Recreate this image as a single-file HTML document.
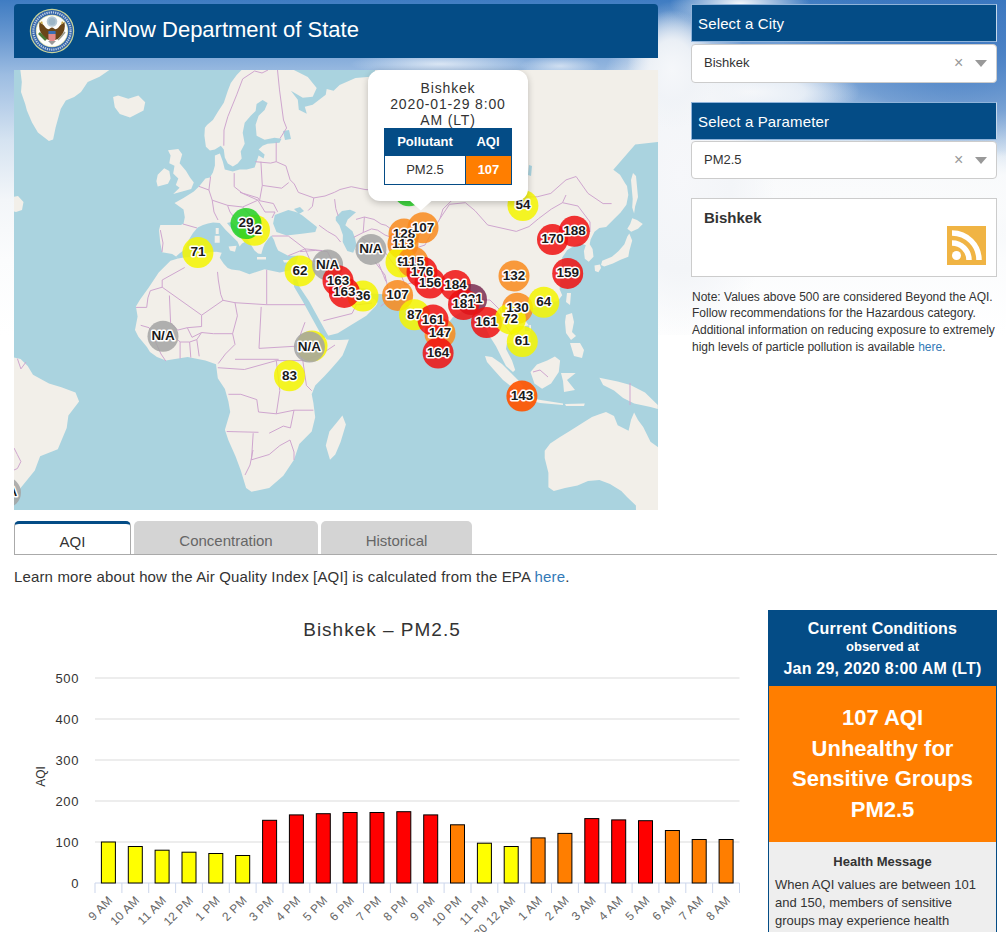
<!DOCTYPE html>
<html><head><meta charset="utf-8">
<style>
*{box-sizing:border-box}
html,body{margin:0;padding:0}
body{width:1006px;height:932px;overflow:hidden;position:relative;font-family:"Liberation Sans",sans-serif;color:#333;
background:#fff}
.sky{position:absolute;left:0;top:0;width:1006px;height:335px;
background:
 radial-gradient(ellipse 45px 60px at 672px 70px, rgba(245,247,250,1) 0%, rgba(240,243,247,.9) 50%, rgba(240,243,247,0) 100%),
 radial-gradient(ellipse 95px 175px at 680px 175px, rgba(246,247,250,1) 0%, rgba(243,245,248,1) 55%, rgba(243,245,248,0) 100%),
 radial-gradient(ellipse 70px 26px at 740px 4px, rgba(255,255,255,.95) 0%, rgba(255,255,255,0) 100%),
 radial-gradient(ellipse 110px 30px at 750px 92px, rgba(245,247,250,1) 0%, rgba(245,247,250,.8) 50%, rgba(245,247,250,0) 100%),
 radial-gradient(ellipse 340px 50px at 850px 195px, rgba(250,251,252,1) 0%, rgba(250,251,252,.9) 60%, rgba(250,251,252,0) 100%),
 radial-gradient(ellipse 180px 110px at 960px 50px, rgba(55,115,190,.85) 0%, rgba(55,115,190,.5) 60%, rgba(55,115,190,0) 100%),
 radial-gradient(ellipse 90px 12px at 440px 64px, rgba(250,251,253,.7) 0%, rgba(250,251,253,0) 100%),
 radial-gradient(ellipse 40px 10px at 560px 66px, rgba(250,251,253,.6) 0%, rgba(250,251,253,0) 100%),
 linear-gradient(to bottom, #3f7cc2 0px, #6d9bd2 40px, #9dbde2 75px, #d5e3f1 140px, #f3f6f9 200px, #fbfcfd 260px, #fff 335px);}
.hdr{position:absolute;left:14px;top:4px;width:644px;height:54px;background:#044c86;border-radius:4px 4px 0 0}
.hdr .t{position:absolute;left:71px;top:13px;font-size:22px;color:#fff;line-height:26px;white-space:nowrap}
.seal{position:absolute;left:29px;top:7.5px}
.map{position:absolute;left:14px;top:70px}
.ml{font-size:13.5px;font-weight:bold;fill:#1a1a1a;stroke:#fff;stroke-width:3px;stroke-linejoin:round;paint-order:stroke;text-anchor:middle}
.tip{position:absolute;left:368px;top:70px;width:160px;height:131px;background:#fff;border-radius:12px;box-shadow:0 2px 7px rgba(0,0,0,.22)}
.tiparrow{position:absolute;left:411px;top:193px;width:20px;height:20px;overflow:hidden}
.tiparrow:after{content:"";position:absolute;left:3px;top:-8px;width:14px;height:14px;background:#fff;transform:rotate(45deg);box-shadow:0 3px 14px rgba(0,0,0,.4)}
.tipt{position:absolute;left:368px;top:80px;width:160px;text-align:center;font-size:14px;line-height:16px;letter-spacing:0.85px;color:#333}
.ttab{position:absolute;left:384px;top:128px;width:128px;height:57px;border:1px solid #044c86;background:#fff}
.ttab .h1{position:absolute;left:0;top:0;width:80px;height:27px;background:#044c86;color:#fff;font-weight:bold;font-size:13px;text-align:center;line-height:25px}
.ttab .h2{position:absolute;left:80px;top:0;width:46px;height:27px;background:#044c86;color:#fff;font-weight:bold;font-size:13px;text-align:center;line-height:25px}
.ttab .c1{position:absolute;left:0;top:27px;width:80px;height:28px;background:#fff;color:#333;font-size:13px;text-align:center;line-height:28px}
.ttab .c2{position:absolute;left:80px;top:27px;width:46px;height:28px;background:#ff7e00;color:#fff;font-weight:bold;font-size:13px;text-align:center;line-height:28px;border-left:1px solid #044c86}
.sh{position:absolute;left:691px;width:306px;height:38px;background:#044c86;color:#fff;font-size:15px;line-height:37px;padding-left:6px;letter-spacing:0.15px;border:1px solid #8fb3da;border-right-color:#c5d8ec}
.sel{position:absolute;left:691px;width:306px;height:38px;background:#fff;border:1px solid #ccc;border-radius:4px;font-size:13px;line-height:36px;padding-left:12px;color:#333}
.sel .x{position:absolute;left:262px;top:0;font-size:16px;color:#999}
.sel .a{position:absolute;left:283px;top:15px;width:0;height:0;border-left:6px solid transparent;border-right:6px solid transparent;border-top:7px solid #999}
.rss{position:absolute;left:691px;top:198px;width:306px;height:79px;background:#fff;border:1px solid #ccc}
.rss .n{position:absolute;left:12px;top:10px;font-size:15px;font-weight:bold;color:#333}
.rss svg{position:absolute;left:255px;top:27px}
.note{position:absolute;left:692px;top:288.5px;width:312px;font-size:12px;line-height:16.9px;color:#333}
a{color:#337ab7;text-decoration:none}
.tabs{position:absolute;left:14px;top:521px;width:983px;height:34px;border-bottom:1px solid #aaa}
.tab{position:absolute;top:0;height:33px;border-radius:5px 5px 0 0;font-size:15px;text-align:center;line-height:40px}
.learn{position:absolute;left:14px;top:568px;font-size:15px;letter-spacing:0.15px;color:#333;white-space:nowrap}
.chart{position:absolute;left:0;top:600px}
.ct{font-size:19px;fill:#333;letter-spacing:1px}
.yl{font-size:13px;fill:#333;letter-spacing:0.6px}
.xl{font-size:12px;fill:#666;letter-spacing:0.3px}
.yt{font-size:12px;fill:#333}
.cc{position:absolute;left:768px;top:610px;width:229px;height:330px;border:1px solid #044c86;background:#eee}
.cc .top{position:absolute;left:0;top:0;width:227px;height:75px;background:#044c86;color:#fff;text-align:center;font-weight:bold}
.cc .org{position:absolute;left:0;top:75px;width:227px;height:156px;background:#ff7e00;color:#fff;text-align:center;font-weight:bold;font-size:22px;line-height:30.7px;padding-top:17px}
.cc .hm{position:absolute;left:0;top:231px;width:227px;text-align:center;font-weight:bold;font-size:13px;color:#333;padding-top:12px}
.cc .hb{position:absolute;left:6px;top:265px;width:212px;font-size:13px;line-height:18px;color:#333}
</style></head><body>
<div class="sky"></div>
<div class="hdr"><div class="t">AirNow Department of State</div></div>
<svg class="seal" width="46" height="46" viewBox="-23 -23 46 46">
 <circle r="22.2" fill="#c9d49a"/>
 <circle r="21" fill="#2f62a8"/>
 <circle r="18.6" fill="none" stroke="#e8eef6" stroke-width="2.2" stroke-dasharray="1.3 0.9" opacity="0.75"/>
 <circle r="16.2" fill="#d8dca8"/>
 <circle r="15.4" fill="#fdfdfb"/>
 <circle cx="0" cy="-9.5" r="5.3" fill="#b4c8d6"/>
 <circle cx="0" cy="-9.5" r="3.5" fill="#9cb6c8"/>
 <path d="M-12.5,-9 Q-14,-1 -9,5 Q-6,8.5 -3,9 L3,9 Q6,8.5 9,5 Q14,-1 12.5,-9 Q9,-7 6,-3 Q4,-1 2,-2.5 Q0,-4.5 -2,-2.5 Q-4,-1 -6,-3 Q-9,-7 -12.5,-9Z" fill="#6a4619"/>
 <path d="M-12,-8 L-10,-10 L-9,-7Z M12,-8 L10,-10 L9,-7Z" fill="#c9a840"/>
 <rect x="-3.6" y="0" width="7.2" height="3" fill="#3a6fb5"/>
 <path d="M-3.6,3 L3.6,3 L3.6,7 Q3.6,10 0,11 Q-3.6,10 -3.6,7Z" fill="#e38a8a"/>
 <path d="M-13,2 Q-10,5 -6,9" stroke="#4a7a35" stroke-width="2.6" fill="none"/>
 <path d="M13,1 Q10,5 6,9" stroke="#9a9a8a" stroke-width="1.6" fill="none"/>
 <path d="M-4,10 L0,14 L4,10Z" fill="#9a9a9a"/>
</svg>
<svg class="map" width="644" height="440" viewBox="14 70 644 440">
<rect x="14" y="70" width="644" height="440" fill="#aad3df"/>
<path d="M241.7,69.8 L236.7,75.0 L230.8,82.9 L227.8,90.8 L223.8,102.8 L217.9,111.7 L212.9,120.0 L207.0,125.0 L204.9,127.8 L204.4,135.7 L205.9,146.7 L209.9,150.6 L214.9,149.6 L220.8,145.7 L223.8,149.6 L224.8,157.6 L227.8,163.6 L232.8,166.5 L237.7,163.6 L241.7,158.6 L240.7,151.6 L244.7,143.7 L242.7,132.7 L244.7,122.8 L250.7,115.8 L255.6,110.9 L256.6,103.9 L262.6,99.9 L267.6,102.9 L264.6,109.9 L258.6,115.8 L255.6,124.8 L256.6,135.7 L264.6,139.7 L274.5,137.7 L281.5,138.7 L279.5,142.7 L267.6,143.7 L262.6,145.7 L258.6,149.6 L264.6,154.6 L263.6,158.6 L258.6,155.6 L256.6,161.6 L254.6,167.5 L246.7,169.5 L239.7,169.5 L232.8,171.5 L224.8,169.5 L222.8,161.6 L219.9,153.6 L214.9,155.6 L214.9,165.5 L212.9,172.5 L209.9,177.5 L205.4,178.6 L199.0,186.4 L193.8,191.5 L183.5,198.0 L174.5,203.1 L183.5,209.6 L184.8,217.3 L183.5,223.7 L180.9,225.0 L160.3,225.0 L159.0,230.2 L160.3,243.1 L162.1,252.3 L172.2,254.0 L176.0,256.5 L178.0,258.5 L170.5,260.8 L158.7,272.6 L148.6,287.8 L140.1,299.6 L135.9,306.4 L137.6,316.5 L135.0,330.0 L138.4,336.8 L146.9,347.0 L150.0,352.0 L157.0,357.1 L165.8,360.6 L175.0,359.0 L187.7,357.1 L205.4,360.6 L216.0,364.2 L217.8,378.3 L224.9,389.0 L228.4,401.4 L230.2,412.0 L224.9,429.7 L228.4,440.3 L235.5,456.3 L240.8,470.4 L246.1,488.1 L251.5,491.7 L269.2,488.1 L283.3,475.7 L294.0,459.8 L299.3,443.9 L311.7,431.5 L315.2,417.3 L313.4,403.1 L311.7,394.3 L315.2,385.4 L324.1,376.6 L331.0,369.0 L338.0,361.0 L342.5,355.4 L346.0,347.0 L348.9,339.5 L340.0,340.0 L332.0,340.0 L326.6,339.5 L325.0,336.4 L337.7,333.2 L353.6,323.6 L366.3,315.7 L375.9,306.1 L377.5,303.0 L374.8,299.5 L369.0,297.0 L368.0,291.0 L372.7,293.5 L386.6,294.5 L401.0,296.0 L404.0,300.0 L407.2,304.9 L412.0,309.0 L419.0,316.2 L422.0,327.5 L426.0,338.0 L428.8,348.1 L433.5,351.3 L437.0,345.0 L442.1,335.5 L447.4,324.2 L453.0,317.0 L459.7,312.9 L467.4,306.5 L476.7,304.9 L479.4,312.0 L480.0,320.0 L484.4,325.0 L490.0,336.8 L496.0,346.3 L502.0,358.3 L506.0,366.0 L513.0,372.0 L515.2,370.0 L512.0,360.5 L506.0,349.0 L507.0,343.0 L512.2,343.4 L518.3,349.5 L525.0,346.0 L530.7,340.3 L530.0,333.0 L529.1,326.1 L523.5,318.0 L523.0,310.9 L530.7,308.1 L540.0,307.0 L546.1,305.4 L552.0,302.0 L557.5,301.3 L562.2,295.3 L559.6,289.3 L561.0,275.0 L562.2,257.6 L567.3,249.9 L574.0,246.0 L580.0,243.0 L585.8,245.2 L583.9,251.0 L584.8,258.8 L588.7,261.7 L593.5,256.8 L592.6,249.1 L589.7,244.3 L590.6,239.4 L594.5,231.7 L599.3,227.9 L606.1,226.9 L613.8,219.2 L620.6,212.4 L626.4,204.7 L628.3,195.0 L627.0,186.0 L625.1,183.3 L620.0,174.8 L613.3,169.8 L635.2,144.4 L657.6,141.9 L660.0,141.9 L660.0,68.0 L241.7,68.0 Z M20.1,68.0 L21.8,81.9 L21.0,92.0 L25.2,103.9 L26.9,110.6 L32.0,122.5 L37.9,132.6 L48.9,141.0 L53.1,139.4 L55.6,127.5 L60.7,108.9 L65.8,100.5 L74.2,97.1 L81.0,92.0 L87.7,81.9 L99.6,76.8 L112.2,68.0 Z M113.1,97.1 L118.1,95.4 L128.3,98.8 L138.4,95.4 L145.2,102.2 L143.5,110.6 L130.0,117.4 L119.8,114.0 L114.8,107.2 Z M168.0,150.3 L178.3,149.0 L182.2,154.2 L179.6,163.2 L186.1,170.9 L190.0,177.4 L193.8,182.5 L191.2,189.0 L182.2,191.5 L173.2,194.1 L179.6,187.7 L175.8,185.1 L178.3,178.6 L173.2,173.5 L174.5,165.8 L169.3,163.2 L170.6,155.5 Z M157.7,174.8 L164.2,168.3 L169.3,170.9 L170.6,178.6 L168.0,183.8 L157.7,186.4 L156.4,181.2 Z M12.0,197.0 L18.0,196.0 L23.5,202.0 L22.0,210.0 L16.0,212.0 L12.0,211.0 Z M12.0,357.1 L20.6,358.9 L27.7,365.9 L33.0,374.8 L49.0,383.6 L61.4,387.2 L75.5,392.5 L79.1,401.4 L68.4,415.5 L66.7,427.9 L57.8,449.2 L40.1,456.3 L34.8,470.4 L20.6,488.1 L12.0,500.0 Z M342.4,415.5 L345.9,424.4 L340.6,442.1 L335.3,454.5 L330.0,459.8 L325.8,445.6 L329.4,431.5 L338.2,420.8 Z M438.0,341.0 L442.0,344.0 L443.0,351.0 L439.0,354.0 L436.0,348.0 Z M632.2,218.2 L637.0,220.0 L642.8,224.0 L638.0,228.8 L631.2,231.7 L627.3,228.8 L630.2,224.0 Z M629.3,233.6 L632.2,240.4 L629.3,251.0 L628.3,256.8 L620.6,259.7 L612.9,263.6 L604.2,266.5 L601.0,265.0 L602.2,260.7 L611.9,256.8 L618.6,251.0 L624.4,244.3 L627.3,236.5 Z M594.5,265.5 L600.0,264.5 L601.0,268.0 L598.4,272.3 L595.0,271.0 Z M633.0,173.0 L636.0,176.0 L638.0,197.0 L635.1,206.6 L634.1,213.4 L632.2,207.6 L632.7,198.9 L631.0,180.0 Z M567.0,293.0 L571.0,293.0 L570.0,305.0 L566.0,302.0 Z M525.0,326.0 L531.0,325.0 L531.0,331.0 L525.0,331.0 Z M566.0,315.0 L572.0,313.0 L574.0,322.0 L572.0,332.0 L576.0,336.0 L571.0,340.0 L566.0,333.0 L565.0,322.0 Z M570.0,343.0 L580.0,343.0 L584.0,350.0 L582.0,358.0 L574.0,356.0 Z M485.0,356.0 L492.0,357.0 L502.0,364.0 L511.0,373.0 L518.0,380.0 L523.0,386.0 L521.0,391.0 L513.0,388.0 L503.0,380.0 L494.0,370.0 L487.0,362.0 Z M532.0,398.0 L539.2,399.7 L563.0,403.4 L563.0,405.0 L540.0,403.0 L532.0,401.0 Z M565.0,404.0 L584.8,403.4 L584.0,406.0 L566.0,406.0 Z M530.5,372.0 L536.9,364.4 L547.2,360.4 L554.9,356.6 L560.1,360.4 L558.8,372.0 L551.1,383.6 L542.1,388.8 L534.4,383.6 Z M561.0,373.0 L575.7,373.0 L567.0,380.0 L575.0,390.0 L564.0,392.0 L563.0,381.0 Z M599.4,377.8 L617.7,381.5 L630.4,385.1 L645.0,392.4 L657.8,405.0 L657.8,409.0 L650.5,407.0 L634.1,403.4 L623.1,397.9 L614.0,390.6 L603.1,385.1 Z M544.7,450.8 L550.2,443.5 L560.0,437.0 L570.2,430.7 L584.8,421.6 L592.0,417.0 L599.4,414.3 L606.0,412.0 L614.0,416.1 L617.7,425.2 L628.6,430.7 L631.0,420.0 L634.1,412.5 L638.0,420.0 L643.2,427.1 L650.5,441.7 L657.8,447.1 L660.0,447.0 L660.0,512.0 L636.0,512.0 L635.9,505.5 L627.0,497.0 L621.3,490.9 L610.0,484.0 L599.4,480.0 L588.0,481.0 L577.5,485.4 L565.0,488.0 L553.8,490.9 L548.4,487.3 L548.4,472.7 L544.7,458.1 Z" fill="#f2efe9" fill-rule="nonzero"/>
<path d="M176.0,256.5 L180.0,253.0 L184.8,249.5 L187.0,244.0 L189.9,237.9 L193.0,233.0 L197.7,227.6 L203.0,225.0 L208.0,223.5 L213.1,222.4 L219.7,222.9 L225.7,229.9 L231.6,235.8 L237.6,241.8 L239.6,246.5 L242.0,243.5 L244.4,242.2 L243.5,240.0 L238.0,236.0 L232.0,229.0 L227.0,223.0 L231.0,222.0 L238.0,228.0 L245.0,235.0 L249.4,242.2 L254.5,250.6 L258.0,253.5 L261.3,254.0 L263.0,248.0 L264.6,243.9 L268.0,239.0 L271.4,235.4 L274.0,240.0 L276.0,246.0 L278.1,250.6 L288.3,255.7 L298.4,255.7 L296.0,263.0 L295.0,269.2 L279.8,272.6 L264.6,269.2 L249.4,274.3 L239.6,270.6 L231.6,269.6 L227.7,268.0 L223.7,263.7 L219.7,257.7 L221.7,252.7 L216.7,251.7 L210.6,252.0 L203.6,254.5 L195.0,256.5 L184.0,257.5 L178.0,258.5 Z M274.8,215.1 L288.3,210.0 L296.0,212.0 L301.8,215.1 L317.0,227.0 L315.3,232.0 L301.8,233.7 L286.6,235.4 L276.5,232.0 L273.1,223.6 Z M294.0,209.0 L300.0,207.0 L304.0,211.0 L299.0,214.0 Z M335.8,217.0 L342.0,211.0 L350.1,209.8 L356.0,212.2 L347.7,219.4 L345.3,225.3 L352.5,231.3 L355.0,238.0 L356.5,245.0 L353.2,252.7 L347.3,251.0 L342.7,242.0 L342.9,234.9 L339.4,225.3 L335.8,220.6 Z M293.0,279.0 L294.2,287.0 L302.7,301.3 L310.7,315.7 L318.6,330.0 L322.5,338.0 L329.0,337.0 L325.0,330.0 L317.1,315.7 L309.1,301.3 L299.6,287.0 L297.0,279.0 Z M342.4,280.9 L351.7,286.1 L362.0,288.0 L368.0,288.6 L368.0,291.8 L362.5,298.0 L353.2,294.6 L347.0,288.0 Z M293.9,70.0 L307.8,76.9 L316.7,87.9 L312.7,96.8 L302.8,97.8 L290.9,90.8 L297.8,99.8 L298.8,109.7 L306.8,113.7 L304.8,106.7 L312.7,104.8 L325.7,94.8 L326.7,88.9 L333.6,90.8 L339.6,84.9 L355.5,77.9 L367.4,76.9 L375.0,76.0 L375.0,68.0 L293.9,68.0 Z M529.0,165.0 L532.0,166.0 L531.0,176.0 L528.0,175.0 Z M283.0,131.0 L289.0,130.0 L291.0,139.0 L285.0,140.0 Z" fill="#aad3df"/>
<path d="M215.7,227.9 L218.7,227.9 L218.7,233.9 L215.7,233.9 Z M214.7,235.8 L219.7,235.8 L219.7,242.8 L214.7,242.8 Z M228.6,246.5 L236.6,245.8 L235.0,251.7 L230.0,250.5 Z M257.0,257.0 L266.0,257.0 L266.0,259.5 L257.0,259.5 Z M283.0,260.0 L290.0,260.0 L289.0,262.5 L284.0,262.5 Z" fill="#f2efe9"/>
<path d="M136,307.4 L146.7,307.4 L147.9,297.9 L150.3,290.7 L162.2,287.2 L162.2,280 L184.7,267.5 M162.2,287.2 L201.6,315.2 L223,300.3 L235,302.7 M217.5,271.9 L218.3,280 L220.7,294.3 L223,300.3 M169.4,295.5 L170.6,322.9 L177.7,330.1 L187.3,327.7 L201.6,326.5 L201.6,315.2 M201.6,332.5 L213.5,333.7 L232.6,333.7 M187.3,327.7 L192,337.3 L201.6,332.5 M235,302.7 L266.7,304.7 L305,304.7 M266.7,269.7 L266.7,304.7 M235,302.7 L237.4,315.8 L232.6,333.7 L235,344.4 L225.4,354 L218.3,363.5 M261.2,306.9 L259,348.4 L296.2,346.2 L305,322.2 M235,359.3 L278.7,359.3 M140.7,325.3 L149.1,327.7 L161,354 L165.8,361.1 M180.1,342 L180.1,358.7 M189.6,342 L190.8,357.5 M196.8,339.6 L199.2,356.3 M177.7,339.6 L180.1,342 L189.6,342 L196.8,339.6 L201.6,332.5 M217.8,367.7 L244.4,369.5 L276.3,360.6 L279.8,390.7 L276.3,413.8 M228.4,394.3 L240.8,394.3 L256.8,399.6 L258.5,412 L276.3,413.8 L294,410.2 L313.4,410.2 M226.7,431.5 L258.5,432.3 M253.2,433.2 L251.5,459.8 L269.2,454.5 L279.8,445.6 L290,440 M269.2,433.2 L283.3,426.1 L290.4,427.9 L294,410.2 M290,440 L294,452 L294,460 M302.8,360.6 L306.4,385.4 L311.7,390.7 M296.2,346.2 L302.8,360.6 L320,355 L335,345 M276.3,360.6 L302.8,360.6 M245,475 L250,465 L253,450 M254.6,71 L242.7,78.9 L236.7,94.8 L227.8,116.7 L224,130 L223.8,145.7 M277.5,70 L279.5,89.9 L283.5,120 L286.6,128 L280,138.5 M254.6,71 L262,73 L268,70 M276.2,142.3 L276.2,161.7 L285.9,165.9 L290.1,179.8 L294.3,184 L298.4,192.4 L313.8,197.9 L312.4,206.3 L308.2,210.5 M262.3,185.4 L281.7,188.2 L288.7,182.6 M334.5,192.3 L325,196 L313.8,197.9 M255.3,161.7 L270.6,163.1 L276.2,161.7 M260.9,161.7 L262.3,185.4 L259.5,200.7 L273.4,203.5 L277.6,211.8 M240,192.4 L258.1,197.9 L259.5,200.7 M234.2,173.1 L234.2,186.7 L242.7,193.4 L257.9,200.2 M210.6,176.5 L208.9,190 L212.2,200.2 L227.5,205.3 L242.7,207 L257.9,200.2 M199,186.4 L208.9,190 M212.2,200.2 L214,212 L218,220 M227.5,205.3 L230,212 L236,220 M242.7,207 L250,215 L256,225 L262,238 M257.9,200.2 L265,212 L275,212 L272,218 M183,224 L197,228 M160.3,230 L163,243 L162,252 M272,236 L288.3,236 L305.2,248.9 L322.1,250.6 M288.3,255.7 L305.2,248.9 M301.8,269.2 L310.3,260.8 L325.5,262.5 M305.2,248.9 L310.3,260.8 M319.1,225.3 L327.4,231.3 L335.8,236.1 L340.6,242 M327.4,251.6 L331,258.7 L335.8,265.9 L342,280 M300,251.6 L315.5,250.4 L327.4,251.6 M378.7,263.5 L383.5,275.4 L385.9,281.4 M323.4,320.7 L352,313.5 L356.8,304 M325,262 L338,268 L345,290 L355,305 L372,303 M334.5,192.3 L340,189.5 L351.3,186.7 L365,189.5 L372,190 M524,197 L537.2,196.8 L550.8,193.4 L566,179.9 L576.1,176.5 L588,193.4 L603.1,203.6 L611.6,203.6 M440,218.6 L443,209 L452.7,199.5 L460,195 M334.6,199.1 L335.8,208.6 L338.2,215.8 M356,219.4 L364.4,217 L374,219.4 L381.1,224.1 L385.9,225.3 L395,232 L410,250 M364.4,217 L363.2,232.5 M353.7,237.3 L363.2,232.5 L371.6,228.9 L377.5,230.1 L385,235 L393,238 M362,238 L372,245 L385,252 L392,262 L400,272 L405,285 M375,262 L385,275 L387.5,286.1 L389.1,299.6 L380.7,306.4 M440,218.6 L449.5,204.3 L465.4,202.7 L475,210.7 L487.7,225 L516.3,231.4 L529,226.6 L538.6,218.6 L551.3,209.1 L562.5,202.7 L566,195 M410,250 L425,245 L432,232 L440,218.6 M562.5,202.7 L578,206 L590,222 L590,232 M405,285 L420,280 L440,280 L460,282 L470,290 L478,300 M478,300 L490,300 L500,310 L510,318 L523,310 M500,310 L505,325 L512,335 M520,328 L515,340 M548,377 L540,370 L533,372 M630,383 L630,405 M17.4,358.6 L20.9,368.9 L26,362 M14,448 L17.4,454.7 L20.9,461.6 L17.4,468.5 L14,470" fill="none" stroke="#cfa6cf" stroke-width="1" stroke-linejoin="round"/>
<circle cx="409" cy="190.7" r="15.5" fill="#22d022" fill-opacity="0.85"/><circle cx="254.5" cy="230.3" r="15.5" fill="#f5f500" fill-opacity="0.85"/><circle cx="246" cy="223.6" r="15.5" fill="#22d022" fill-opacity="0.85"/><circle cx="197.9" cy="252.6" r="15.5" fill="#f5f500" fill-opacity="0.85"/><circle cx="300.1" cy="270.9" r="15.5" fill="#f5f500" fill-opacity="0.85"/><circle cx="363" cy="296" r="15.5" fill="#f5f500" fill-opacity="0.85"/><circle cx="327.6" cy="264.9" r="15.5" fill="#a3a3a3" fill-opacity="0.85"/><circle cx="338" cy="280.8" r="15.5" fill="#f01010" fill-opacity="0.85"/><circle cx="344.3" cy="292.4" r="15.5" fill="#f01010" fill-opacity="0.85"/><circle cx="370.9" cy="249.4" r="15.5" fill="#a3a3a3" fill-opacity="0.85"/><circle cx="163" cy="336.3" r="15.5" fill="#a3a3a3" fill-opacity="0.85"/><circle cx="312" cy="346" r="15.5" fill="#f5f500" fill-opacity="0.85"/><circle cx="309.4" cy="347" r="15.5" fill="#a3a3a3" fill-opacity="0.85"/><circle cx="289.5" cy="375.7" r="15.5" fill="#f5f500" fill-opacity="0.85"/><circle cx="5.5" cy="492.6" r="15.5" fill="#a3a3a3" fill-opacity="0.85"/><circle cx="404" cy="234" r="15.5" fill="#f98a1c" fill-opacity="0.85"/><circle cx="403" cy="244" r="15.5" fill="#f98a1c" fill-opacity="0.85"/><circle cx="423" cy="227.8" r="15.5" fill="#f98a1c" fill-opacity="0.85"/><circle cx="401" cy="262" r="15.5" fill="#f5f500" fill-opacity="0.85"/><circle cx="413" cy="262" r="15.5" fill="#f98a1c" fill-opacity="0.85"/><circle cx="422" cy="272" r="15.5" fill="#f01010" fill-opacity="0.85"/><circle cx="430" cy="283" r="15.5" fill="#f01010" fill-opacity="0.85"/><circle cx="455.5" cy="285.5" r="15.5" fill="#f01010" fill-opacity="0.85"/><circle cx="471.5" cy="299.5" r="15.5" fill="#7a2d52" fill-opacity="0.85"/><circle cx="463.5" cy="304.5" r="15.5" fill="#f01010" fill-opacity="0.85"/><circle cx="397.6" cy="295.4" r="15.5" fill="#f98a1c" fill-opacity="0.85"/><circle cx="414.5" cy="314.8" r="15.5" fill="#f5f500" fill-opacity="0.85"/><circle cx="440" cy="333.4" r="15.5" fill="#f98a1c" fill-opacity="0.85"/><circle cx="433.1" cy="320" r="15.5" fill="#f01010" fill-opacity="0.85"/><circle cx="438.1" cy="353" r="15.5" fill="#f01010" fill-opacity="0.85"/><circle cx="486.5" cy="322.5" r="15.5" fill="#f01010" fill-opacity="0.85"/><circle cx="522.9" cy="205.5" r="15.5" fill="#f5f500" fill-opacity="0.85"/><circle cx="552.5" cy="239.6" r="15.5" fill="#f01010" fill-opacity="0.85"/><circle cx="574.4" cy="231.2" r="15.5" fill="#f01010" fill-opacity="0.85"/><circle cx="567.7" cy="273.4" r="15.5" fill="#f01010" fill-opacity="0.85"/><circle cx="514" cy="276" r="15.5" fill="#f98a1c" fill-opacity="0.85"/><circle cx="517.5" cy="308.2" r="15.5" fill="#f98a1c" fill-opacity="0.85"/><circle cx="543.8" cy="302.2" r="15.5" fill="#f5f500" fill-opacity="0.85"/><circle cx="510.4" cy="318.9" r="15.5" fill="#f5f500" fill-opacity="0.85"/><circle cx="522.3" cy="341.6" r="15.5" fill="#f5f500" fill-opacity="0.85"/><circle cx="521.9" cy="396.1" r="15.5" fill="#ff5500" fill-opacity="0.92"/><text x="254.5" y="234.1" class="ml">92</text><text x="246.0" y="227.4" class="ml">29</text><text x="197.9" y="256.4" class="ml">71</text><text x="300.1" y="274.7" class="ml">62</text><text x="363.0" y="299.8" class="ml">36</text><text x="327.6" y="268.7" class="ml">N/A</text><text x="338.0" y="284.6" class="ml">163</text><text x="344.3" y="296.2" class="ml">163</text><text x="370.9" y="253.2" class="ml">N/A</text><text x="163.0" y="340.1" class="ml">N/A</text><text x="309.4" y="350.8" class="ml">N/A</text><text x="289.5" y="379.5" class="ml">83</text><text x="5.5" y="496.4" class="ml">N/A</text><text x="404.0" y="237.8" class="ml">128</text><text x="403.0" y="247.8" class="ml">113</text><text x="423.0" y="231.6" class="ml">107</text><text x="401.0" y="265.8" class="ml">9</text><text x="413.0" y="265.8" class="ml">115</text><text x="422.0" y="275.8" class="ml">176</text><text x="430.0" y="286.8" class="ml">156</text><text x="455.5" y="289.3" class="ml">184</text><text x="471.5" y="303.3" class="ml">331</text><text x="463.5" y="308.3" class="ml">181</text><text x="397.6" y="299.2" class="ml">107</text><text x="414.5" y="318.6" class="ml">87</text><text x="440.0" y="337.2" class="ml">147</text><text x="433.1" y="323.8" class="ml">161</text><text x="438.1" y="356.8" class="ml">164</text><text x="486.5" y="326.3" class="ml">161</text><text x="522.9" y="209.3" class="ml">54</text><text x="552.5" y="243.4" class="ml">170</text><text x="574.4" y="235.0" class="ml">188</text><text x="567.7" y="277.2" class="ml">159</text><text x="514.0" y="279.8" class="ml">132</text><text x="517.5" y="312.0" class="ml">130</text><text x="543.8" y="306.0" class="ml">64</text><text x="510.4" y="322.7" class="ml">72</text><text x="522.3" y="345.4" class="ml">61</text><text x="521.9" y="399.9" class="ml">143</text>
</svg>
<div class="tip"></div><svg style="position:absolute;left:400px;top:190px" width="44" height="24" viewBox="400 190 44 24"><path d="M409,200 L420.8,210.6 L432.6,200 Z" fill="#fff"/></svg>
<div class="tipt">Bishkek<br>2020-01-29 8:00<br>AM (LT)</div>
<div class="ttab"><div class="h1">Pollutant</div><div class="h2">AQI</div><div class="c1">PM2.5</div><div class="c2">107</div></div>


<div class="sh" style="top:4px">Select a City</div>
<div class="sel" style="top:44px;height:38.5px;line-height:36px">Bishkek<span class="x">×</span><span class="a"></span></div>
<div class="sh" style="top:101.5px">Select a Parameter</div>
<div class="sel" style="top:141px;height:38.3px;line-height:36px">PM2.5<span class="x">×</span><span class="a"></span></div>
<div class="rss"><div class="n">Bishkek</div>
<svg width="39" height="39" viewBox="0 0 39 39"><rect width="39" height="39" fill="#f0b444"/>
<circle cx="9.5" cy="29.5" r="4.5" fill="#fff"/>
<path d="M5,17 A17,17 0 0 1 22,34" stroke="#fff" stroke-width="5.5" fill="none"/>
<path d="M5,7 A27,27 0 0 1 32,34" stroke="#fff" stroke-width="5.5" fill="none"/>
</svg></div>
<div class="note">Note: Values above 500 are considered Beyond the AQI. Follow recommendations for the Hazardous category. Additional information on reducing exposure to extremely high levels of particle pollution is available <a>here</a>.</div>

<div class="tabs">
 <div class="tab" style="left:0;width:117px;background:#fff;border:1px solid #aaa;border-top:3px solid #044c86;height:34px;line-height:35px;color:#333">AQI</div>
 <div class="tab" style="left:120px;width:184px;background:#d4d4d4;color:#666">Concentration</div>
 <div class="tab" style="left:307px;width:151px;background:#d4d4d4;color:#666">Historical</div>
</div>
<div class="learn">Learn more about how the Air Quality Index [AQI] is calculated from the EPA <a>here</a>.</div>
<svg class="chart" width="760" height="332" viewBox="0 600 760 332">
<text x="382" y="636" text-anchor="middle" class="ct">Bishkek – PM2.5</text>
<text transform="translate(44.5,776.5) rotate(-90)" text-anchor="middle" class="yt">AQI</text>
<text x="79" y="888.0" text-anchor="end" class="yl">0</text><rect x="95.0" y="841.5" width="644.5" height="1" fill="#dcdcdc"/><text x="79" y="847.0" text-anchor="end" class="yl">100</text><rect x="95.0" y="800.5" width="644.5" height="1" fill="#dcdcdc"/><text x="79" y="806.0" text-anchor="end" class="yl">200</text><rect x="95.0" y="759.5" width="644.5" height="1" fill="#dcdcdc"/><text x="79" y="765.0" text-anchor="end" class="yl">300</text><rect x="95.0" y="718.5" width="644.5" height="1" fill="#dcdcdc"/><text x="79" y="724.0" text-anchor="end" class="yl">400</text><rect x="95.0" y="677.5" width="644.5" height="1" fill="#dcdcdc"/><text x="79" y="683.0" text-anchor="end" class="yl">500</text><rect x="95.0" y="882.5" width="644.5" height="1" fill="#ccd6eb"/><rect x="94.5" y="883.0" width="1" height="10" fill="#ccd6eb"/><rect x="121.4" y="883.0" width="1" height="10" fill="#ccd6eb"/><rect x="148.2" y="883.0" width="1" height="10" fill="#ccd6eb"/><rect x="175.1" y="883.0" width="1" height="10" fill="#ccd6eb"/><rect x="201.9" y="883.0" width="1" height="10" fill="#ccd6eb"/><rect x="228.8" y="883.0" width="1" height="10" fill="#ccd6eb"/><rect x="255.6" y="883.0" width="1" height="10" fill="#ccd6eb"/><rect x="282.5" y="883.0" width="1" height="10" fill="#ccd6eb"/><rect x="309.3" y="883.0" width="1" height="10" fill="#ccd6eb"/><rect x="336.2" y="883.0" width="1" height="10" fill="#ccd6eb"/><rect x="363.0" y="883.0" width="1" height="10" fill="#ccd6eb"/><rect x="389.9" y="883.0" width="1" height="10" fill="#ccd6eb"/><rect x="416.8" y="883.0" width="1" height="10" fill="#ccd6eb"/><rect x="443.6" y="883.0" width="1" height="10" fill="#ccd6eb"/><rect x="470.5" y="883.0" width="1" height="10" fill="#ccd6eb"/><rect x="497.3" y="883.0" width="1" height="10" fill="#ccd6eb"/><rect x="524.2" y="883.0" width="1" height="10" fill="#ccd6eb"/><rect x="551.0" y="883.0" width="1" height="10" fill="#ccd6eb"/><rect x="577.9" y="883.0" width="1" height="10" fill="#ccd6eb"/><rect x="604.7" y="883.0" width="1" height="10" fill="#ccd6eb"/><rect x="631.6" y="883.0" width="1" height="10" fill="#ccd6eb"/><rect x="658.4" y="883.0" width="1" height="10" fill="#ccd6eb"/><rect x="685.3" y="883.0" width="1" height="10" fill="#ccd6eb"/><rect x="712.1" y="883.0" width="1" height="10" fill="#ccd6eb"/><rect x="739.0" y="883.0" width="1" height="10" fill="#ccd6eb"/><rect x="101.4" y="842.0" width="14" height="41.0" fill="#ffff00" stroke="#000" stroke-width="1"/><text transform="translate(113.4,901.0) rotate(-45)" text-anchor="end" class="xl">9 AM</text><rect x="128.3" y="846.5" width="14" height="36.5" fill="#ffff00" stroke="#000" stroke-width="1"/><text transform="translate(140.3,901.0) rotate(-45)" text-anchor="end" class="xl">10 AM</text><rect x="155.1" y="850.2" width="14" height="32.8" fill="#ffff00" stroke="#000" stroke-width="1"/><text transform="translate(167.1,901.0) rotate(-45)" text-anchor="end" class="xl">11 AM</text><rect x="182.0" y="852.2" width="14" height="30.7" fill="#ffff00" stroke="#000" stroke-width="1"/><text transform="translate(194.0,901.0) rotate(-45)" text-anchor="end" class="xl">12 PM</text><rect x="208.8" y="853.5" width="14" height="29.5" fill="#ffff00" stroke="#000" stroke-width="1"/><text transform="translate(220.8,901.0) rotate(-45)" text-anchor="end" class="xl">1 PM</text><rect x="235.7" y="855.5" width="14" height="27.5" fill="#ffff00" stroke="#000" stroke-width="1"/><text transform="translate(247.7,901.0) rotate(-45)" text-anchor="end" class="xl">2 PM</text><rect x="262.6" y="820.3" width="14" height="62.7" fill="#ff0000" stroke="#000" stroke-width="1"/><text transform="translate(274.6,901.0) rotate(-45)" text-anchor="end" class="xl">3 PM</text><rect x="289.4" y="814.9" width="14" height="68.1" fill="#ff0000" stroke="#000" stroke-width="1"/><text transform="translate(301.4,901.0) rotate(-45)" text-anchor="end" class="xl">4 PM</text><rect x="316.3" y="813.7" width="14" height="69.3" fill="#ff0000" stroke="#000" stroke-width="1"/><text transform="translate(328.3,901.0) rotate(-45)" text-anchor="end" class="xl">5 PM</text><rect x="343.1" y="812.5" width="14" height="70.5" fill="#ff0000" stroke="#000" stroke-width="1"/><text transform="translate(355.1,901.0) rotate(-45)" text-anchor="end" class="xl">6 PM</text><rect x="370.0" y="812.5" width="14" height="70.5" fill="#ff0000" stroke="#000" stroke-width="1"/><text transform="translate(382.0,901.0) rotate(-45)" text-anchor="end" class="xl">7 PM</text><rect x="396.8" y="811.7" width="14" height="71.3" fill="#ff0000" stroke="#000" stroke-width="1"/><text transform="translate(408.8,901.0) rotate(-45)" text-anchor="end" class="xl">8 PM</text><rect x="423.7" y="814.9" width="14" height="68.1" fill="#ff0000" stroke="#000" stroke-width="1"/><text transform="translate(435.7,901.0) rotate(-45)" text-anchor="end" class="xl">9 PM</text><rect x="450.5" y="824.8" width="14" height="58.2" fill="#ff7e00" stroke="#000" stroke-width="1"/><text transform="translate(462.5,901.0) rotate(-45)" text-anchor="end" class="xl">10 PM</text><rect x="477.4" y="843.2" width="14" height="39.8" fill="#ffff00" stroke="#000" stroke-width="1"/><text transform="translate(489.4,901.0) rotate(-45)" text-anchor="end" class="xl">11 PM</text><rect x="504.2" y="846.5" width="14" height="36.5" fill="#ffff00" stroke="#000" stroke-width="1"/><text transform="translate(516.2,901.0) rotate(-45)" text-anchor="end" class="xl">Jan 30 12 AM</text><rect x="531.1" y="837.9" width="14" height="45.1" fill="#ff7e00" stroke="#000" stroke-width="1"/><text transform="translate(543.1,901.0) rotate(-45)" text-anchor="end" class="xl">1 AM</text><rect x="557.9" y="833.4" width="14" height="49.6" fill="#ff7e00" stroke="#000" stroke-width="1"/><text transform="translate(569.9,901.0) rotate(-45)" text-anchor="end" class="xl">2 AM</text><rect x="584.8" y="818.6" width="14" height="64.4" fill="#ff0000" stroke="#000" stroke-width="1"/><text transform="translate(596.8,901.0) rotate(-45)" text-anchor="end" class="xl">3 AM</text><rect x="611.7" y="819.9" width="14" height="63.1" fill="#ff0000" stroke="#000" stroke-width="1"/><text transform="translate(623.7,901.0) rotate(-45)" text-anchor="end" class="xl">4 AM</text><rect x="638.5" y="820.7" width="14" height="62.3" fill="#ff0000" stroke="#000" stroke-width="1"/><text transform="translate(650.5,901.0) rotate(-45)" text-anchor="end" class="xl">5 AM</text><rect x="665.4" y="830.5" width="14" height="52.5" fill="#ff7e00" stroke="#000" stroke-width="1"/><text transform="translate(677.4,901.0) rotate(-45)" text-anchor="end" class="xl">6 AM</text><rect x="692.2" y="839.5" width="14" height="43.5" fill="#ff7e00" stroke="#000" stroke-width="1"/><text transform="translate(704.2,901.0) rotate(-45)" text-anchor="end" class="xl">7 AM</text><rect x="719.1" y="839.5" width="14" height="43.5" fill="#ff7e00" stroke="#000" stroke-width="1"/><text transform="translate(731.1,901.0) rotate(-45)" text-anchor="end" class="xl">8 AM</text>
</svg>
<div class="cc">
 <div class="top"><div style="font-size:16px;padding-top:8px;line-height:19px;letter-spacing:0.2px">Current Conditions</div><div style="font-size:13px;line-height:18px">observed at</div><div style="font-size:16px;line-height:22px;letter-spacing:0.2px;margin-top:2px">Jan 29, 2020 8:00 AM (LT)</div></div>
 <div class="org">107 AQI<br>Unhealthy for<br>Sensitive Groups<br>PM2.5</div>
 <div class="hm">Health Message</div>
 <div class="hb">When AQI values are between 101 and 150, members of sensitive groups may experience health effects.</div>
</div>
</body></html>
